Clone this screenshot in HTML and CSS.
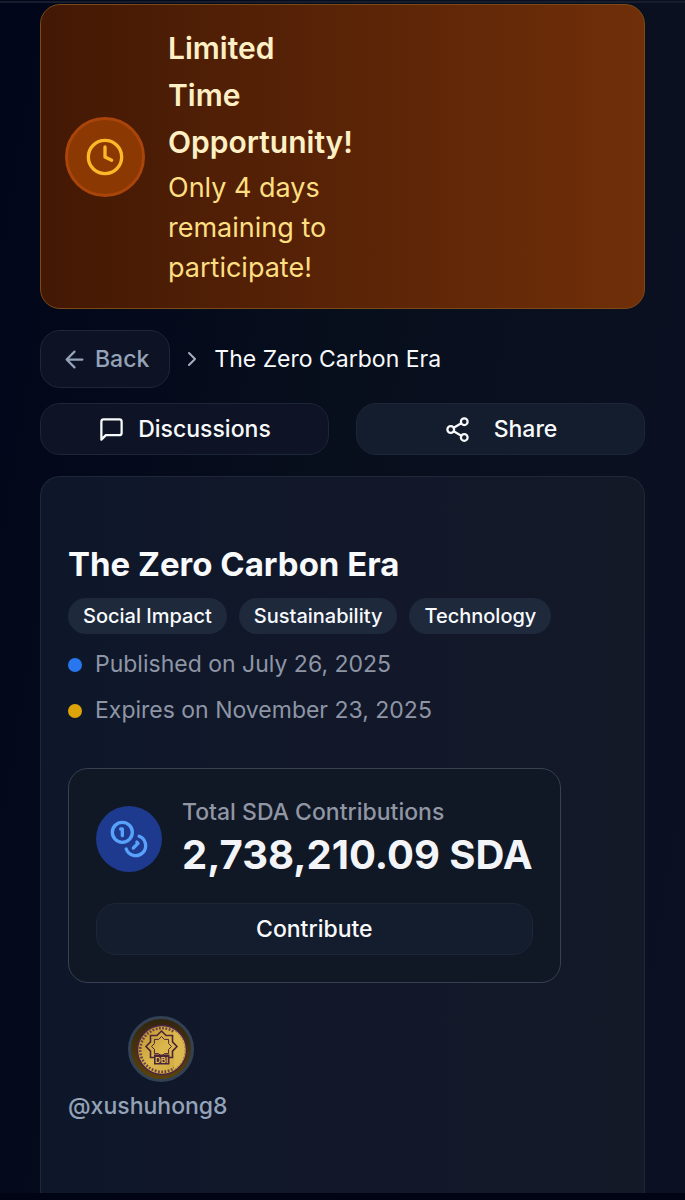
FILE: index.html
```html
<!DOCTYPE html>
<html lang="en">
<head>
<meta charset="utf-8">
<meta name="viewport" content="width=device-width, initial-scale=1">
<title>The Zero Carbon Era</title>
<link rel="stylesheet" href="styles.css">
</head>
<body>
<div class="page">
  <header class="topbar"></header>
  <main class="content">
    <section class="banner">
      <span class="banner-icon">
        <svg class="icon icon-lg" viewBox="0 0 24 24"><circle cx="12" cy="12" r="10"/><path d="M12 6v6l4 2"/></svg>
      </span>
      <div class="banner-text">
        <h2 class="banner-title">Limited<br>Time<br>Opportunity!</h2>
        <p class="banner-note">Only 4 days<br>remaining to<br>participate!</p>
      </div>
    </section>

    <nav class="crumbs">
      <button class="back" type="button">
        <svg class="icon" viewBox="0 0 24 24"><path d="m12 19-7-7 7-7M19 12H5"/></svg>
        Back
      </button>
      <svg class="icon chevron" viewBox="0 0 24 24"><path d="m9 18 6-6-6-6"/></svg>
      <span class="crumb">The Zero Carbon Era</span>
    </nav>

    <div class="actions">
      <button class="btn btn-dim" type="button">
        <svg class="icon" viewBox="0 0 24 24"><path d="M21 15a2 2 0 0 1-2 2H7l-4 4V5a2 2 0 0 1 2-2h14a2 2 0 0 1 2 2z"/></svg>
        Discussions
      </button>
      <button class="btn btn-wide" type="button">
        <svg class="icon" viewBox="0 0 24 24"><circle cx="18" cy="5" r="3"/><circle cx="6" cy="12" r="3"/><circle cx="18" cy="19" r="3"/><path d="m8.59 13.51 6.83 3.98M15.41 6.51l-6.82 3.98"/></svg>
        Share
      </button>
    </div>

    <article class="card">
      <h1 class="title">The Zero Carbon Era</h1>
      <ul class="tags">
        <li class="tag">Social Impact</li>
        <li class="tag">Sustainability</li>
        <li class="tag">Technology</li>
      </ul>
      <ul class="dates">
        <li class="date"><span class="dot dot-blue"></span>Published on July 26, 2025</li>
        <li class="date"><span class="dot dot-amber"></span>Expires on November 23, 2025</li>
      </ul>

      <section class="total">
        <div class="total-row">
          <span class="coin">
            <svg class="icon icon-lg" viewBox="0 0 24 24"><circle cx="8" cy="8" r="6"/><path d="M18.09 10.37A6 6 0 1 1 10.34 18M7 6h1v4M16.71 13.88l.7.71-2.82 2.82"/></svg>
          </span>
          <div>
            <p class="total-label">Total SDA Contributions</p>
            <p class="total-value">2,738,210.09 SDA</p>
          </div>
        </div>
        <button class="btn" type="button">Contribute</button>
      </section>

      <div class="author">
        <svg class="avatar" viewBox="0 0 66 66" role="img" aria-label="DBI">
          <defs>
            <linearGradient id="gold" x1="0" y1="0" x2="1" y2="1">
              <stop offset="0" stop-color="#b98f30"/>
              <stop offset=".5" stop-color="#dcb84e"/>
              <stop offset="1" stop-color="#cda63c"/>
            </linearGradient>
            <linearGradient id="rim" x1="0" y1="0" x2="0" y2="1">
              <stop offset="0" stop-color="#30240e"/>
              <stop offset="1" stop-color="#5d430b"/>
            </linearGradient>
          </defs>
          <circle cx="33" cy="33" r="31.5" fill="url(#rim)" stroke="#334155" stroke-width="3"/>
          <circle cx="34" cy="34" r="24.500" fill="url(#gold)" stroke="#4b2346" stroke-width="1.500"/>
          <circle cx="34" cy="34" r="21.800" fill="none" stroke="#6b4340" stroke-width="2.600" stroke-dasharray="1.800 1.500"/>
          <path d="M46 14.500a23 23 0 0 1 0 39z" fill="#dcb84e"/>
          <g fill="none" stroke="#4c2437">
            <path d="M33.5 15l4.600 4.500h6.400v6.400L49 30.500l-4.500 4.600v6.400h-6.400L33.500 46l-4.600-4.500h-6.400v-6.400L18 30.500l4.500-4.600v-6.400h6.400z" stroke-width="1.600"/>
            <path d="M33.500 20.500l2.900 2.900h4.200v4.200l2.900 2.900-2.900 2.900v4.200h-4.200l-2.900 2.900-2.900-2.900h-4.200v-4.200l-2.900-2.900 2.900-2.900v-4.200h4.200z" stroke-width="1"/>
          </g>
          <rect x="26" y="38.500" width="15.500" height="10" fill="#4c2437"/>
          <text class="avatar-text" x="33.700" y="46.500" text-anchor="middle">DBI</text>
        </svg>
        <a class="handle" href="#">@xushuhong8</a>
      </div>
    </article>
  </main>
  <footer class="bottombar"></footer>
</div>
</body>
</html>
```
FILE: styles.css
```css
* { box-sizing: border-box; }

body {
  margin: 0;
  background: #020617;
  color: #f8fafc;
  font-family: Inter, "Liberation Sans", sans-serif;
  font-size: 23px;
  line-height: 33px;
}

h1, h2, p, ul { margin: 0; padding: 0; }
ul { list-style: none; }
button { font: inherit; color: inherit; cursor: pointer; }

.page {
  display: flex;
  flex-direction: column;
  min-height: 100vh;
  background: linear-gradient(100deg, #01061a 0%, #070e1c 45%, #0a1020 75%, #0b1123 100%);
}

.topbar {
  height: 3px;
  border-bottom: 2px solid #171d2d;
}

.content {
  flex: 1;
  display: flex;
  flex-direction: column;
  padding: 1px 40px 0;
}

.icon {
  width: 27px;
  height: 27px;
  flex: none;
  fill: none;
  stroke: currentColor;
  stroke-width: 2;
  stroke-linecap: round;
  stroke-linejoin: round;
}
.icon-lg { width: 40px; height: 40px; }

.banner {
  display: flex;
  align-items: center;
  gap: 23px;
  padding: 20px 24px;
  border: 1px solid #7b4a15;
  border-radius: 20px;
  background: linear-gradient(90deg, #431804, #702f09);
}
.banner-icon {
  display: grid;
  place-items: center;
  width: 80px;
  height: 80px;
  border: 3px solid #a9450a;
  border-radius: 50%;
  background: #8c3803;
  color: #fbb829;
}
.banner-title {
  font-size: 30px;
  font-weight: 600;
  line-height: 47px;
  color: #fef0c4;
}
.banner-note {
  margin-top: 2px;
  font-size: 27px;
  line-height: 40px;
  color: #fddf82;
}

.crumbs {
  display: flex;
  align-items: center;
  margin-top: 21px;
}
.back {
  display: flex;
  align-items: center;
  gap: 7px;
  height: 58px;
  padding: 0 20px;
  border: 1px solid #1e2637;
  border-radius: 20px;
  background: #0d1325;
  color: #94a3b8;
  font-weight: 500;
}
.chevron {
  width: 24px;
  height: 24px;
  margin: 0 10px;
  color: #a3aebf;
}

.actions {
  display: grid;
  grid-template-columns: 1fr 1fr;
  gap: 27px;
  margin: 15px 0 21px;
}
.btn {
  display: flex;
  align-items: center;
  justify-content: center;
  gap: 13px;
  width: 100%;
  height: 52px;
  padding: 0 20px;
  border: 1px solid #1c2636;
  border-radius: 20px;
  background: #141d2d;
  font-weight: 500;
}
.btn-dim { background: #0e1425; }
.btn-wide { gap: 23px; }

.card {
  flex: 1;
  padding: 67px 27px 27px;
  border: 1px solid #1f2839;
  border-bottom: 0;
  border-radius: 20px 20px 0 0;
  background: linear-gradient(90deg, #0e172a, #121829 60%, #131927);
}
.title {
  font-size: 33px;
  font-weight: 700;
  line-height: 40px;
}
.tags {
  display: flex;
  flex-wrap: wrap;
  gap: 12px;
  margin-top: 14px;
}
.tag {
  padding: 0 15px;
  border-radius: 18px;
  background: #1e293b;
  font-size: 20px;
  font-weight: 500;
  line-height: 36px;
}
.dates {
  display: grid;
  gap: 13px;
  margin-top: 14px;
}
.date {
  display: flex;
  align-items: center;
  gap: 13px;
  color: #8e95a5;
}
.dot {
  width: 14px;
  height: 14px;
  border-radius: 50%;
}
.dot-blue { background: #2977ee; }
.dot-amber { background: #dca409; }

.total {
  width: fit-content;
  margin-top: 41px;
  padding: 27px;
  border: 1px solid #374151;
  border-radius: 20px;
  background: #101725;
}
.total-row {
  display: flex;
  align-items: center;
  gap: 20px;
  margin-bottom: 22px;
}
.coin {
  display: grid;
  place-items: center;
  width: 66px;
  height: 66px;
  border-radius: 50%;
  background: #1e3a8f;
  color: #58a2fb;
}
.total-label {
  color: #9096a3;
  font-weight: 500;
}
.total-value {
  color: #f3f4f8;
  font-size: 40px;
  font-weight: 700;
  line-height: 52px;
}

.author {
  display: flex;
  flex-direction: column;
  align-items: center;
  gap: 8px;
  width: fit-content;
  margin-top: 33px;
}
.avatar {
  width: 66px;
  height: 66px;
  margin-left: 27px;
}
.avatar-text {
  fill: #e3c25c;
  font-size: 8px;
  font-weight: 600;
}
.handle {
  color: #94a3b8;
  font-weight: 500;
  text-decoration: none;
}

.bottombar {
  height: 7px;
  background: #010414;
}
```
